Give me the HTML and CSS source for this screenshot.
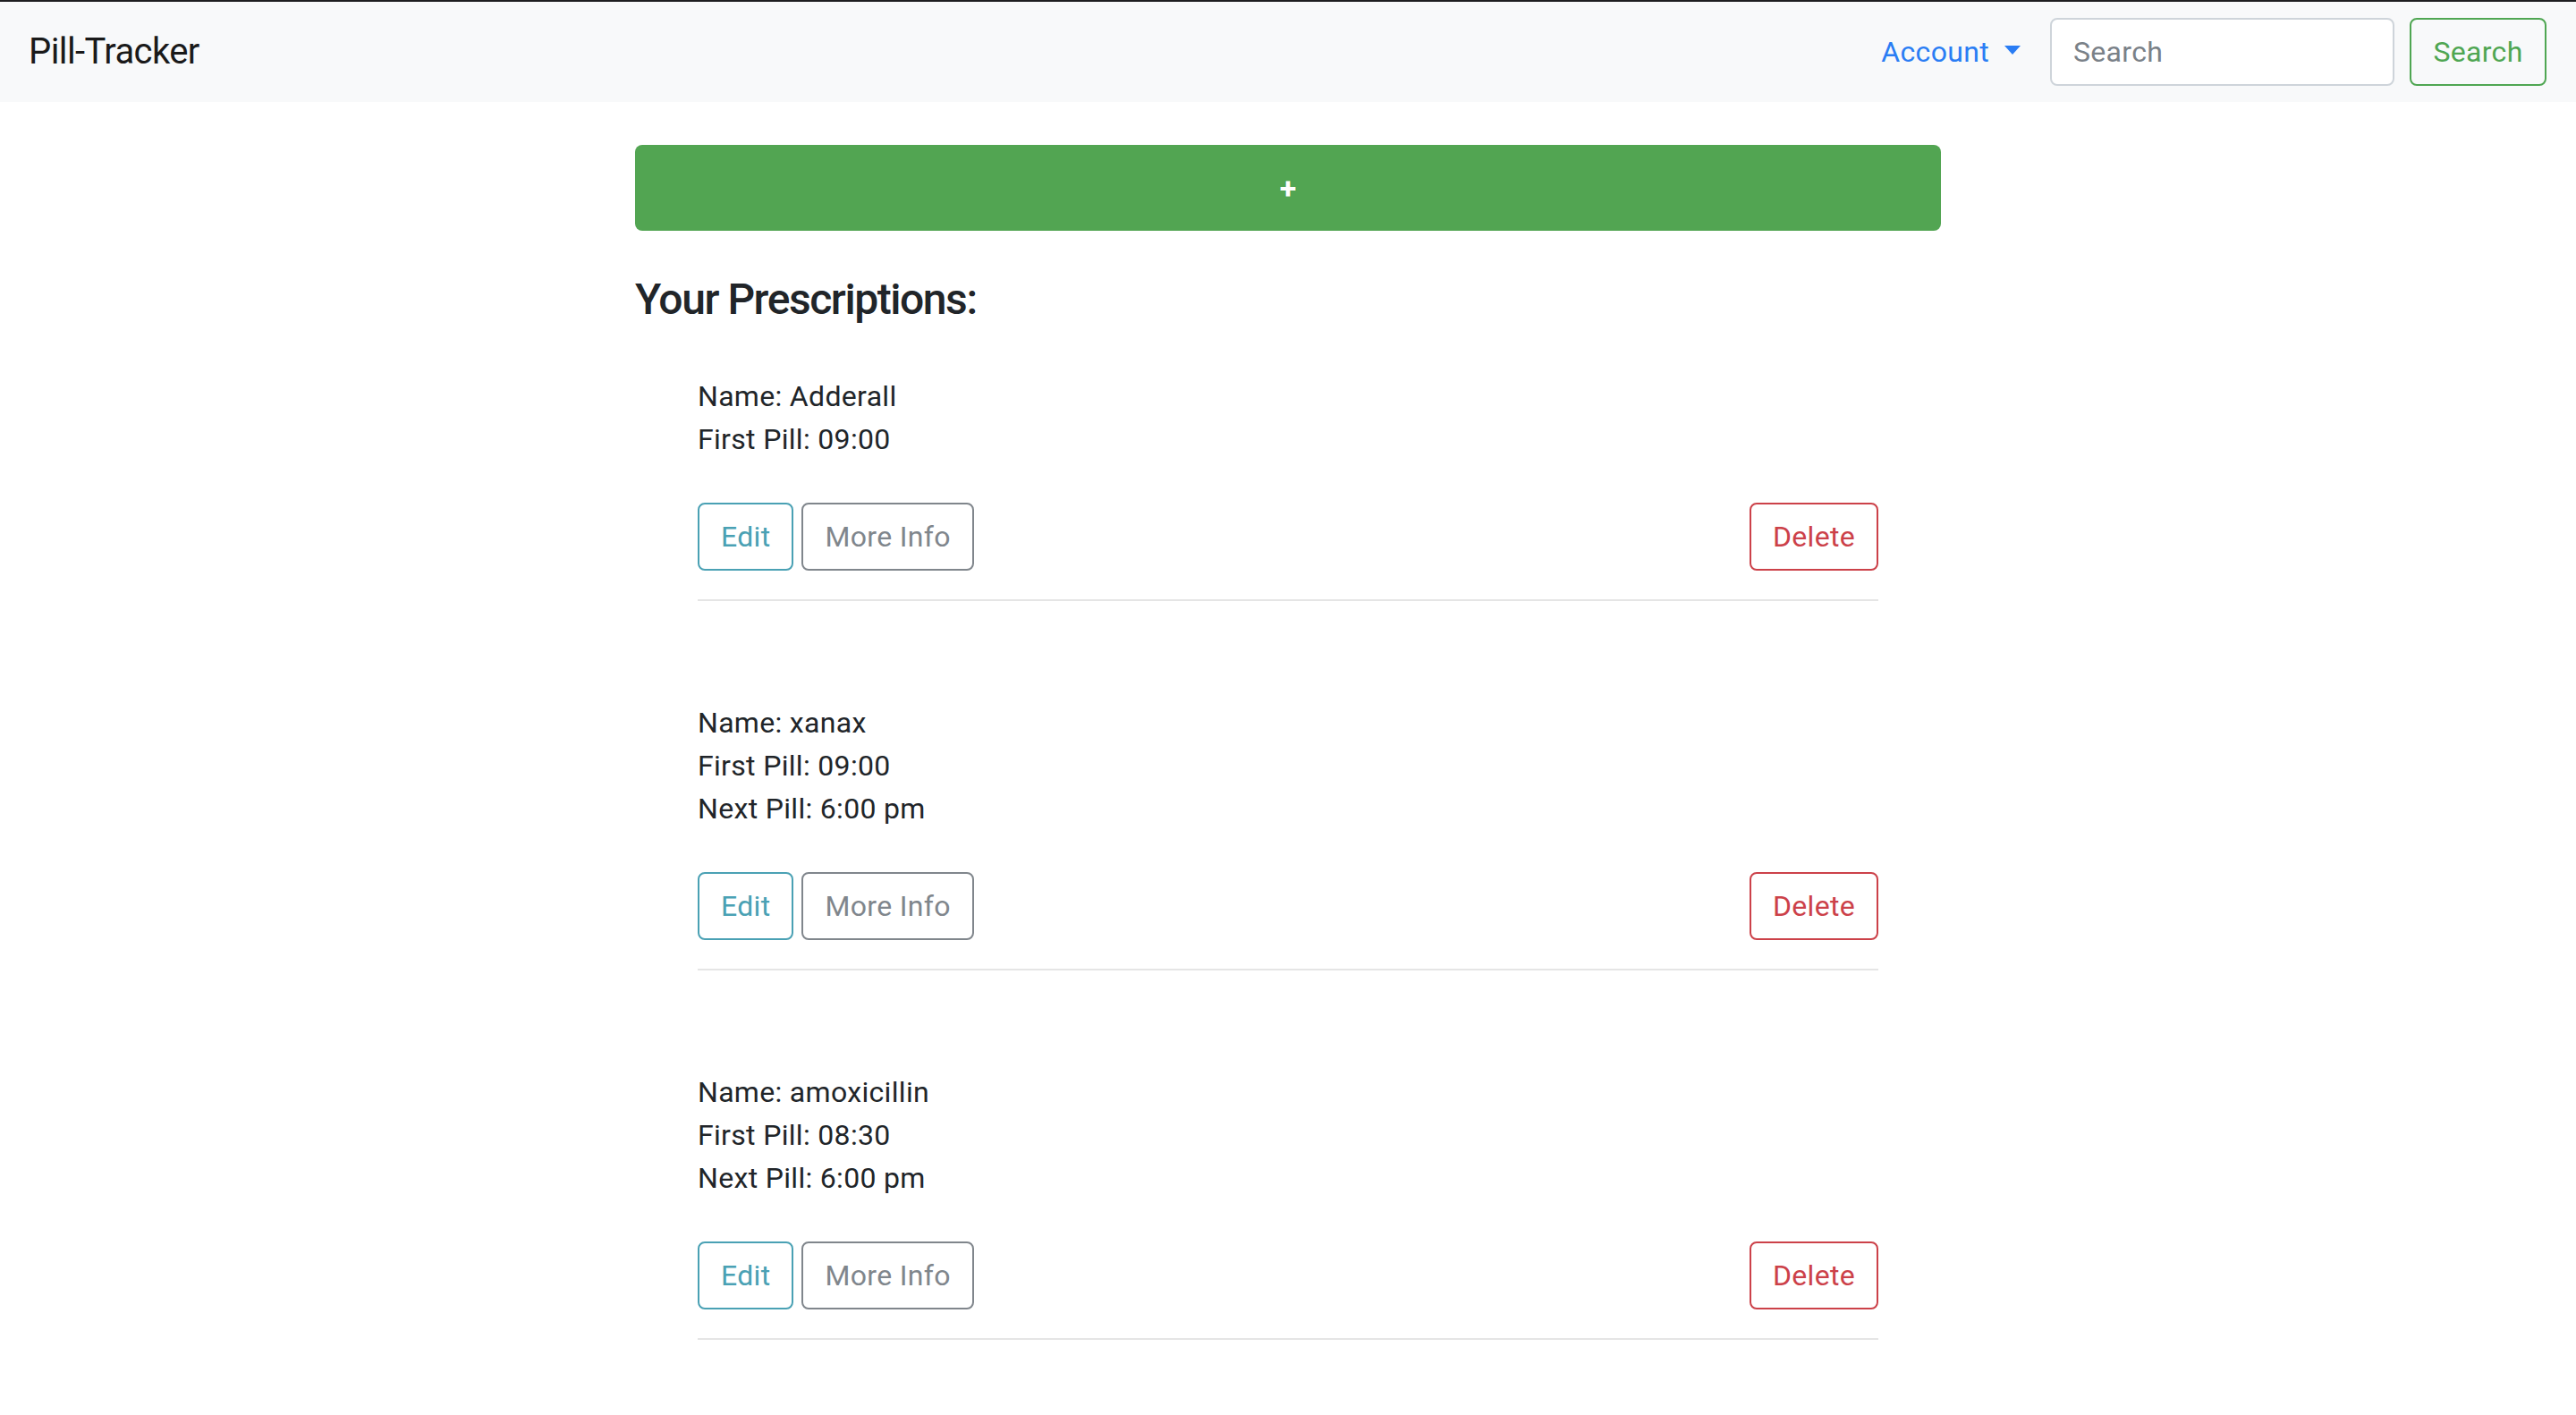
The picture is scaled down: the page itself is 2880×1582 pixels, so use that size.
FILE: index.html
```html
<!DOCTYPE html>
<html lang="en">
<head>
<meta charset="utf-8">
<title>Pill-Tracker</title>
<link rel="stylesheet" href="styles.css">
</head>
<body>
<nav class="navbar">
  <a class="brand" href="#">Pill-Tracker</a>
  <div class="nav-right">
    <a class="account" href="#">Account<span class="caret"></span></a>
    <form class="search-form">
      <input class="search-input" type="search" placeholder="Search">
      <button class="btn btn-search" type="button">Search</button>
    </form>
  </div>
</nav>
<main class="main">
  <button class="add-btn" type="button">+</button>
  <h3 class="title">Your Prescriptions:</h3>
  <div class="rx-list">
    <section class="rx">
      <div class="rx-info">
        <p>Name: Adderall</p>
        <p>First Pill: 09:00</p>
      </div>
      <div class="rx-actions">
        <div class="rx-left">
          <button class="btn btn-edit" type="button">Edit</button>
          <button class="btn btn-more" type="button">More Info</button>
        </div>
        <button class="btn btn-delete" type="button">Delete</button>
      </div>
    </section>
    <section class="rx">
      <div class="rx-info">
        <p>Name: xanax</p>
        <p>First Pill: 09:00</p>
        <p>Next Pill: 6:00 pm</p>
      </div>
      <div class="rx-actions">
        <div class="rx-left">
          <button class="btn btn-edit" type="button">Edit</button>
          <button class="btn btn-more" type="button">More Info</button>
        </div>
        <button class="btn btn-delete" type="button">Delete</button>
      </div>
    </section>
    <section class="rx">
      <div class="rx-info">
        <p>Name: amoxicillin</p>
        <p>First Pill: 08:30</p>
        <p>Next Pill: 6:00 pm</p>
      </div>
      <div class="rx-actions">
        <div class="rx-left">
          <button class="btn btn-edit" type="button">Edit</button>
          <button class="btn btn-more" type="button">More Info</button>
        </div>
        <button class="btn btn-delete" type="button">Delete</button>
      </div>
    </section>
  </div>
</main>
</body>
</html>
```

FILE: styles.css
```css
* { box-sizing: border-box; }

html, body {
  margin: 0;
  padding: 0;
  background: #ffffff;
}

body {
  font-family: Roboto, "Liberation Sans", Arial, sans-serif;
  font-size: 32px;
  line-height: 1.5;
  letter-spacing: 0.01em;
  color: #212529;
  border-top: 2px solid #1e1e20;
}

.navbar {
  height: 112px;
  background: #f8f9fa;
  display: flex;
  align-items: center;
  padding: 0 33px 0 32px;
}

.brand {
  font-size: 40px;
  line-height: 60px;
  letter-spacing: -0.015em;
  color: #1a1a1a;
  text-decoration: none;
}

.nav-right {
  margin-left: auto;
  display: flex;
  align-items: center;
}

.account {
  color: #2a7df4;
  text-decoration: none;
  font-size: 32px;
  line-height: 48px;
  padding: 0 16px;
  margin-right: 17px;
  display: flex;
  align-items: center;
}

.caret {
  display: inline-block;
  width: 0;
  height: 0;
  margin-left: 17px;
  margin-top: -4px;
  border-top: 10px solid #2a7df4;
  border-left: 9px solid transparent;
  border-right: 9px solid transparent;
}

.search-form {
  display: flex;
  align-items: center;
}

.search-input {
  width: 385px;
  height: 76px;
  border: 2px solid #ced4da;
  border-radius: 8px;
  padding: 0 24px;
  font-family: inherit;
  font-size: 32px;
  letter-spacing: 0.01em;
  color: #495057;
  background: #fff;
  margin-right: 17px;
  outline: none;
}

.search-input::placeholder {
  color: #7a8188;
}

.btn {
  font-family: inherit;
  font-size: 32px;
  letter-spacing: 0.01em;
  height: 76px;
  padding: 0 24px;
  border-radius: 8px;
  background: transparent;
  border: 2px solid;
  line-height: 1;
  cursor: pointer;
}

.btn-search {
  width: 153px;
  padding: 0;
  color: #4fa652;
  border-color: #4fa652;
}

.main {
  width: 1460px;
  margin: 0 auto;
  padding-top: 48px;
}

.add-btn {
  display: block;
  width: 100%;
  height: 96px;
  border: none;
  border-radius: 8px;
  background: #52a552;
  color: #ffffff;
  font-family: inherit;
  font-size: 34px;
  font-weight: 700;
  line-height: 1;
  cursor: pointer;
}

.title {
  font-size: 48px;
  font-weight: 500;
  letter-spacing: -0.03em;
  line-height: 58px;
  margin: 48px 0 16px;
  color: #212529;
}

.rx-list {
  width: 1320px;
  margin: 0 auto;
}

.rx {
  padding-top: 39px;
}

.rx + .rx {
  padding-top: 112px;
}

.rx-info p {
  margin: 0;
  line-height: 48px;
}

.rx-actions {
  margin-top: 47px;
  padding-bottom: 32px;
  border-bottom: 2px solid #e5e5e5;
  display: flex;
  justify-content: space-between;
  align-items: center;
}

.rx-left {
  display: flex;
  gap: 9px;
}

.btn-edit {
  color: #4aa1b4;
  border-color: #4aa1b4;
}

.btn-more {
  color: #80868c;
  border-color: #80868c;
}

.btn-delete {
  color: #cc4149;
  border-color: #cc4149;
}
```
